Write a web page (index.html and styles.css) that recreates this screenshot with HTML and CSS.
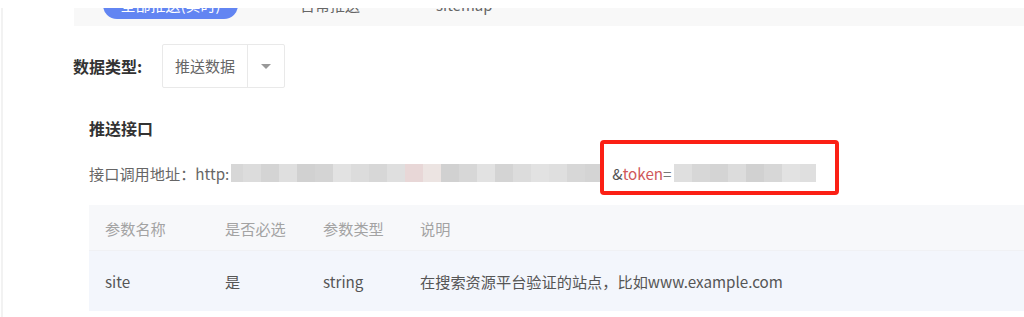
FILE: index.html
```html
<!DOCTYPE html>
<html lang="zh-CN">
<head>
    <meta charset="UTF-8">
    <title>推送接口</title>
<link rel="stylesheet" href="styles.css">
</head>
<body>
    <div class="frame">
        <div class="tab-clip">
            <div class="tabs">
                <span class="tab tab-active">全部推送(实时)</span>
                <span class="tab tab-day">日常推送</span>
                <span class="tab tab-map">sitemap</span>
            </div>
        </div>

        <div class="filter-row">
            <span class="filter-label">数据类型:</span>
            <div class="select">
                <span class="select-value">推送数据</span>
                <span class="select-arrow"></span>
            </div>
        </div>

        <div class="section">
            <h3 class="section-title">推送接口</h3>
            <div class="api-line">
                <span class="api-label">接口调用地址：http:</span>
                <span class="mosaic url-mosaic">
                    <i class="m1 first"></i><i class="m2"></i><i class="m3"></i><i class="m4"></i><i class="m5"></i><i class="m3"></i><i class="m6"></i><i class="m2"></i><i class="m1"></i><i class="m4"></i><i class="pink"></i><i class="pink2"></i><i class="m5"></i><i class="m1"></i><i class="m6"></i><i class="m3"></i><i class="m2"></i><i class="m6"></i><i class="m4"></i><i class="m1"></i><i class="m3"></i>
                </span>
                <span class="amp">&amp;</span><span class="token">token</span><span class="eq">=</span>
                <span class="mosaic">
                    <i class="m4"></i><i class="m1"></i><i class="m3"></i><i class="m2"></i><i class="m5"></i><i class="m1"></i><i class="m6"></i><i class="m4 end"></i>
                </span>
                <span class="mark"></span>
            </div>

            <table class="params">
                <thead>
                    <tr>
                        <th class="col-name">参数名称</th>
                        <th class="col-req">是否必选</th>
                        <th class="col-type">参数类型</th>
                        <th>说明</th>
                    </tr>
                </thead>
                <tbody>
                    <tr>
                        <td>site</td>
                        <td>是</td>
                        <td>string</td>
                        <td>在搜索资源平台验证的站点，比如www.example.com</td>
                    </tr>
                </tbody>
            </table>
        </div>
    </div>
</body>
</html>
```

FILE: styles.css
```css
body{
    margin: 0;
    padding-top: 8px;
    background-color: #ffffff;
    font-family: "Noto Sans CJK SC", "Noto Sans", sans-serif;
    overflow: hidden;
}
.frame{
    margin-left: 1px;
    border-left: 2px solid #f2f2f2;
    padding-left: 70px;
    min-height: 320px;
}

/* tab bar, cut off at the top of the shot */
.tab-clip{
    height: 18px;
    overflow: hidden;
    background-color: #f8f8f8;
    margin-left: 1px;
}
.tabs{
    display: flex;
    align-items: center;
    margin-top: -17px;
    padding-left: 29px;
}
.tab{
    font-size: 15px;
    line-height: 28px;
    color: #666;
}
.tab-active{
    background-color: #6285f2;
    color: #fff;
    border-radius: 14px;
    width: 135px;
    text-align: center;
}
.tab-day{
    margin-left: 62px;
}
.tab-map{
    margin-left: 76px;
}

/* data type select */
.filter-row{
    display: flex;
    align-items: center;
    margin-top: 18px;
}
.filter-label{
    font-size: 16px;
    font-weight: bold;
    color: #333;
    width: 89px;
}
.select{
    display: flex;
    height: 42px;
    border: 1px solid #e9e9e9;
    border-radius: 2px;
}
.select-value{
    width: 84px;
    line-height: 42px;
    text-align: center;
    font-size: 15px;
    color: #666;
    border-right: 1px solid #e9e9e9;
}
.select-arrow{
    width: 36px;
    display: flex;
    align-items: center;
    justify-content: center;
}
.select-arrow::after{
    content: "";
    border-left: 5px solid transparent;
    border-right: 5px solid transparent;
    border-top: 5px solid #999;
}

/* push api */
.section{
    padding-left: 16px;
}
.section-title{
    margin: 29px 0 0;
    font-size: 16px;
    line-height: 22px;
    font-weight: bold;
    color: #333;
}
.api-line{
    position: relative;
    display: flex;
    align-items: center;
    height: 22px;
    margin-top: 23px;
    font-size: 15.2px;
    color: #666;
}
.mosaic{
    display: flex;
    height: 18px;
    filter: blur(0.6px);
}
.url-mosaic{
    margin-left: 2px;
    margin-right: 9px;
}
.mosaic i{
    width: 18px;
    height: 18px;
}
.mosaic .first{ width: 12px; }
.mosaic .end{ width: 16px; }
.m1{ background-color: #d7d7d7; }
.m2{ background-color: #dcdcdc; }
.m3{ background-color: #d4d4d4; }
.m4{ background-color: #dfdfdf; }
.m5{ background-color: #d1d1d1; }
.m6{ background-color: #e2e2e2; }
.pink{ background-color: #e8d7d7; }
.pink2{ background-color: #ece4e2; }
.amp{
    color: #555;
}
.token{
    color: #d0585a;
}
.eq{
    color: #777;
    margin-right: 2px;
}

/* red annotation box drawn over the screenshot */
.mark{
    position: absolute;
    left: 511px;
    top: -22px;
    width: 231px;
    height: 47px;
    border: 4px solid #fb2015;
    border-radius: 4px;
}

/* params table */
.params{
    margin-top: 21px;
    width: 940px;
    border-collapse: collapse;
    font-size: 15.2px;
    text-align: left;
}
.params th{
    background-color: #f7f8fa;
    color: #a3a3a3;
    font-weight: normal;
    height: 45px;
    padding: 0 0 0 16px;
    border-bottom: 1px solid #f0f1f4;
}
.params td{
    background-color: #f3f6fc;
    color: #555;
    height: 60px;
    padding: 0 0 0 16px;
}
.params .col-name{ width: 104px; }
.params .col-req{ width: 82px; }
.params .col-type{ width: 81px; }
```
